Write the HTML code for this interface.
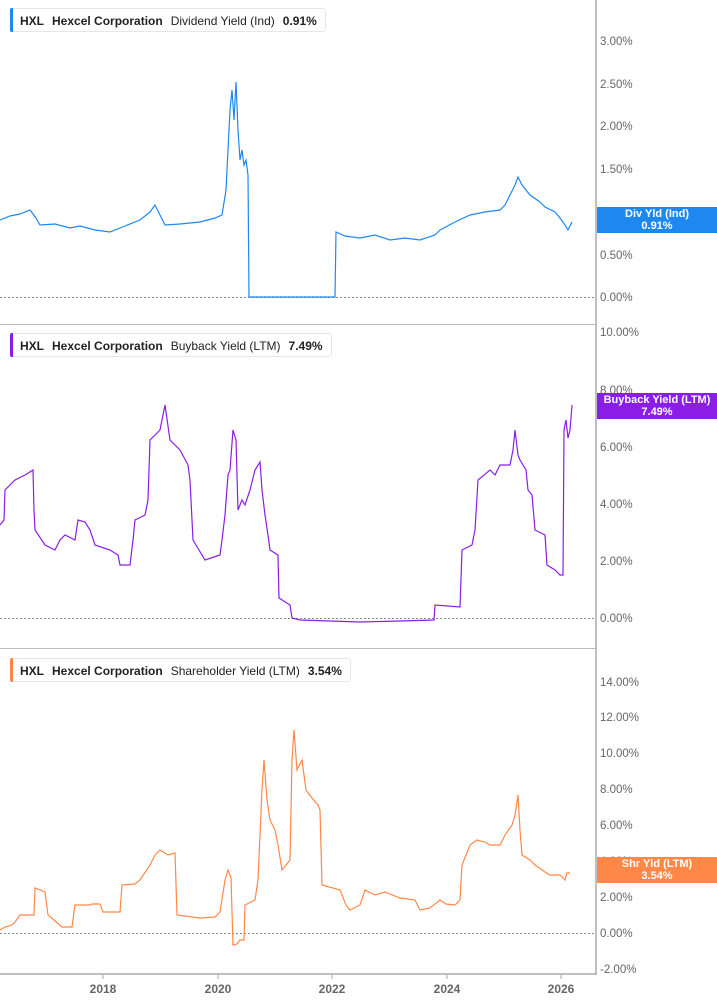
<!DOCTYPE html>
<html><head><meta charset="utf-8"><style>
body{margin:0;width:717px;height:1005px;background:#fff;font-family:"Liberation Sans",sans-serif;position:relative;overflow:hidden}
.leg{position:absolute;left:10px;height:24px;border:1px solid #e6e6e6;border-radius:3px;background:#fff;font-size:12px;color:#222;line-height:24px;padding:0 8px 0 9px;white-space:nowrap;box-sizing:border-box}
.leg:before{content:"";position:absolute;left:-1px;top:-1px;bottom:-1px;width:3px;border-radius:2px 0 0 2px;background:var(--c)}
.leg b{margin-right:8px}
.lab{position:absolute;left:597px;width:120px;color:#fff;font-weight:bold;font-size:11px;text-align:center;line-height:12px;padding-top:1px;box-sizing:border-box}
</style></head><body>
<svg width="717" height="1005" style="position:absolute;left:0;top:0" font-family="Liberation Sans, sans-serif">
<g stroke="#bbb"><line x1="0" y1="324.5" x2="596" y2="324.5"/><line x1="0" y1="648.5" x2="596" y2="648.5"/></g>
<line x1="596" y1="0" x2="596" y2="975" stroke="#aaa" stroke-width="1.5"/>
<line x1="0" y1="974" x2="596" y2="974" stroke="#aaa" stroke-width="1.5"/>
<g stroke="#888" stroke-dasharray="2,2"><line x1="0" y1="297.5" x2="596" y2="297.5"/><line x1="0" y1="618.5" x2="596" y2="618.5"/><line x1="0" y1="933.5" x2="596" y2="933.5"/></g>
<g fill="#666" font-size="11.5">
<text x="600" y="45">3.00%</text><text x="600" y="88">2.50%</text><text x="600" y="130">2.00%</text><text x="600" y="173">1.50%</text><text x="600" y="216">1.00%</text><text x="600" y="259">0.50%</text><text x="600" y="301">0.00%</text>
<text x="600" y="336">10.00%</text><text x="600" y="394">8.00%</text><text x="600" y="451">6.00%</text><text x="600" y="508">4.00%</text><text x="600" y="565">2.00%</text><text x="600" y="622">0.00%</text>
<text x="600" y="686">14.00%</text><text x="600" y="721">12.00%</text><text x="600" y="757">10.00%</text><text x="600" y="793">8.00%</text><text x="600" y="829">6.00%</text><text x="600" y="865">4.00%</text><text x="600" y="901">2.00%</text><text x="600" y="937">0.00%</text><text x="600" y="973">-2.00%</text>
</g>
<g fill="#666" font-size="12" font-weight="bold" text-anchor="middle"><text x="103" y="993">2018</text><text x="218" y="993">2020</text><text x="332" y="993">2022</text><text x="447" y="993">2024</text><text x="561" y="993">2026</text></g>
<g stroke="#aaa"><line x1="103" y1="974" x2="103" y2="979"/><line x1="218" y1="974" x2="218" y2="979"/><line x1="332" y1="974" x2="332" y2="979"/><line x1="447" y1="974" x2="447" y2="979"/><line x1="561" y1="974" x2="561" y2="979"/></g>
<polyline fill="none" stroke="#1e88f0" stroke-width="1.2" points="0,220 10,216 20,214 30,210 36,218 40,225 55,224 70,228 80,226 95,230 110,232 125,226 140,220 150,212 155,205 160,215 165,225 180,224 200,222 215,218 222,215 226,190 228,150 230,110 232,90 234,120 236,82 238,130 240,160 242,150 244,165 246,160 248,175 249,297 335,297 336,232 345,236 360,238 375,235 390,240 405,238 420,240 435,235 440,230 455,222 470,215 485,212 500,210 505,205 510,195 515,185 518,177 522,185 530,195 540,202 545,207 555,212 560,218 565,225 568,230 572,222"/>
<polyline fill="none" stroke="#8a1ee8" stroke-width="1.2" points="0,525 4,520 5,490 15,480 25,475 33,470 34,510 35,530 45,545 55,550 60,540 65,535 75,540 78,520 85,522 90,530 95,545 110,550 118,555 120,565 130,565 133,540 135,520 145,515 148,500 150,440 160,430 165,405 170,440 180,450 188,465 190,480 193,540 205,560 220,555 222,540 225,515 228,475 230,470 233,430 236,440 238,510 242,500 245,505 250,490 255,470 260,462 262,490 265,515 268,535 270,550 278,555 279,598 290,605 292,618 300,620 330,621 360,622 400,621 434,620 435,605 460,607 462,550 472,545 475,530 478,480 490,470 495,475 500,465 510,465 513,450 515,430 518,455 520,460 526,470 528,490 532,495 535,530 545,535 547,565 555,570 560,575 563,575 564,430 566,420 568,438 570,430 572,405"/>
<polyline fill="none" stroke="#ff8848" stroke-width="1.2" points="0,930 5,927 12,925 15,922 20,915 34,915 35,888 45,892 48,915 62,927 72,927 75,905 90,905 92,904 100,904 103,912 120,912 122,885 135,884 140,880 150,865 155,855 160,850 168,855 175,853 177,915 200,918 215,917 220,912 225,880 228,870 231,878 233,945 237,944 240,940 244,940 245,905 255,900 258,880 262,790 264,760 267,800 270,820 275,830 278,845 282,870 290,860 292,760 294,730 297,770 302,760 306,790 312,798 318,805 320,810 322,885 340,890 346,905 350,910 360,905 365,890 375,895 385,892 400,898 415,900 420,910 430,908 440,900 446,904 455,905 460,900 462,865 470,845 477,840 485,842 490,845 500,845 505,835 512,825 515,815 518,795 520,830 522,855 530,860 535,865 545,872 550,875 560,875 565,880 567,873 570,873"/>
</svg>
<div class="leg" style="--c:#1e88f0;top:8px"><b>HXL</b><b>Hexcel Corporation</b><span style="margin-right:8px">Dividend Yield (Ind)</span><b style="margin:0">0.91%</b></div>
<div class="leg" style="--c:#8a1ee8;top:333px"><b>HXL</b><b>Hexcel Corporation</b><span style="margin-right:8px">Buyback Yield (LTM)</span><b style="margin:0">7.49%</b></div>
<div class="leg" style="--c:#ff8848;top:658px"><b>HXL</b><b>Hexcel Corporation</b><span style="margin-right:8px">Shareholder Yield (LTM)</span><b style="margin:0">3.54%</b></div>
<div class="lab" style="top:207px;height:26px;background:#1e88f0">Div Yld (Ind)<br>0.91%</div>
<div class="lab" style="top:393px;height:26px;background:#8a1ee8">Buyback Yield (LTM)<br>7.49%</div>
<div class="lab" style="top:857px;height:26px;background:#ff8848">Shr Yld (LTM)<br>3.54%</div>
</body></html>
